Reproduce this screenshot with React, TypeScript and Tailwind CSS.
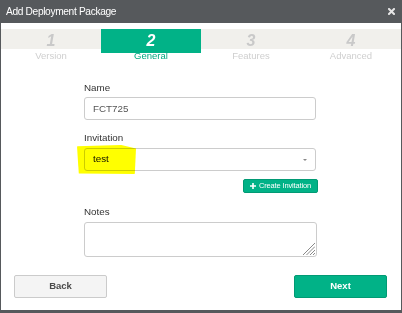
import { useState } from 'react';

const steps = [
  { num: '1', label: 'Version' },
  { num: '2', label: 'General' },
  { num: '3', label: 'Features' },
  { num: '4', label: 'Advanced' },
];

export default function App() {
  const [active] = useState(1);
  const [name, setName] = useState('FCT725');
  const [notes, setNotes] = useState('');

  return (
    <div className="w-[402px] h-[313px] bg-[#56595c] flex flex-col font-['Liberation_Sans',Arial,sans-serif]">
      {/* title bar */}
      <div className="h-[23px] flex items-center justify-between pl-[6px] pr-[7px] shrink-0">
        <span className="text-[10.2px] tracking-[-0.35px] text-white">Add Deployment Package</span>
        <svg width="7" height="7" viewBox="0 0 7 7" className="mt-[-1px]">
          <path d="M1 1 L6 6 M6 1 L1 6" stroke="#e6e6e6" strokeWidth="2" strokeLinecap="square" />
        </svg>
      </div>

      {/* body */}
      <div className="mx-[1px] h-[287px] bg-white pt-[6px] flex flex-col">
        <div className="grid grid-cols-4 h-[20px] bg-[#f1f0ec]">
          {steps.map((s, i) => (
            <div
              key={s.num}
              className={`flex items-center justify-center text-[16px] font-bold italic ${i === active ? 'bg-[#01b287] text-white' : 'text-[#c9c9c9]'}`}
            >
              {s.num}
            </div>
          ))}
        </div>
        <div className="grid grid-cols-4 h-[13px] leading-[13px]">
          {steps.map((s, i) => (
            <div
              key={s.label}
              className={`text-center text-[9.5px] ${i === active ? 'text-[#01a77f]' : 'text-[#cfcfcf]'}`}
            >
              {s.label}
            </div>
          ))}
        </div>

        <div className="ml-[83px] w-[233px] mt-[19px] flex flex-col">
          <label className="text-[9.8px] leading-[13px] text-[#333]">Name</label>
          <input
            value={name}
            onChange={(e) => setName(e.target.value)}
            className="mt-[3px] h-[23px] w-[232px] border border-[#cccccc] rounded-[3px] px-[8px] text-[9.8px] text-[#555] outline-none"
          />

          <label className="mt-[11px] text-[9.8px] leading-[13px] text-[#333]">Invitation</label>
          <div className="relative mt-[4px] h-[23px] w-[232px] border border-[#cccccc] rounded-[3px] flex items-center justify-between px-[8px]">
            <span className="text-[9.8px] text-[#111]">test</span>
            <span className="w-0 h-0 border-l-[2px] border-r-[2px] border-t-[2.5px] border-l-transparent border-r-transparent border-t-[#888]" />
            <div className="absolute left-[-8px] top-[-4px] w-[59px] h-[29px] bg-[#ffff00] mix-blend-multiply rounded-[2px] [clip-path:polygon(0_4%,75%_0,100%_12%,98%_100%,3%_98%)]" />
          </div>

          <div className="flex justify-end mt-[8px]">
            <button className="h-[14px] w-[75px] mr-[-1px] bg-[#01b287] border border-[#019a74] rounded-[2px] flex items-center justify-center gap-[3px] text-white text-[7.5px] tracking-[-0.15px]">
              <svg width="6" height="6" viewBox="0 0 6 6">
                <path d="M3 0 V6 M0 3 H6" stroke="white" strokeWidth="1.6" />
              </svg>
              Create Invitation
            </button>
          </div>

          <label className="mt-[12px] text-[9.8px] leading-[13px] text-[#333]">Notes</label>
          <div className="relative mt-[4px] h-[35px] w-[233px]">
            <textarea
              value={notes}
              onChange={(e) => setNotes(e.target.value)}
              className="block h-full w-full border border-[#cccccc] rounded-[3px] px-[8px] text-[9.8px] outline-none resize-none"
            />
            {/* resize grip */}
            <svg width="13" height="13" viewBox="0 0 13 13" className="absolute right-[2px] bottom-[2px] pointer-events-none">
              <path d="M1 13 L13 1 M4.5 13 L13 4.5 M8 13 L13 8 M11 13 L13 11" stroke="#8a8a8a" strokeWidth="1" />
            </svg>
          </div>
        </div>

        <div className="flex justify-between pl-[13px] pr-[14px] mt-[18px]">
          <button className="h-[23px] w-[93px] bg-[#f4f4f4] border border-[#cbcbcb] rounded-[2px] text-[9.5px] font-bold text-[#4a4a4a]">
            Back
          </button>
          <button className="h-[23px] w-[93px] bg-[#01b287] border border-[#019a74] rounded-[2px] text-[9.5px] font-bold text-white">
            Next
          </button>
        </div>
      </div>
    </div>
  );
}
